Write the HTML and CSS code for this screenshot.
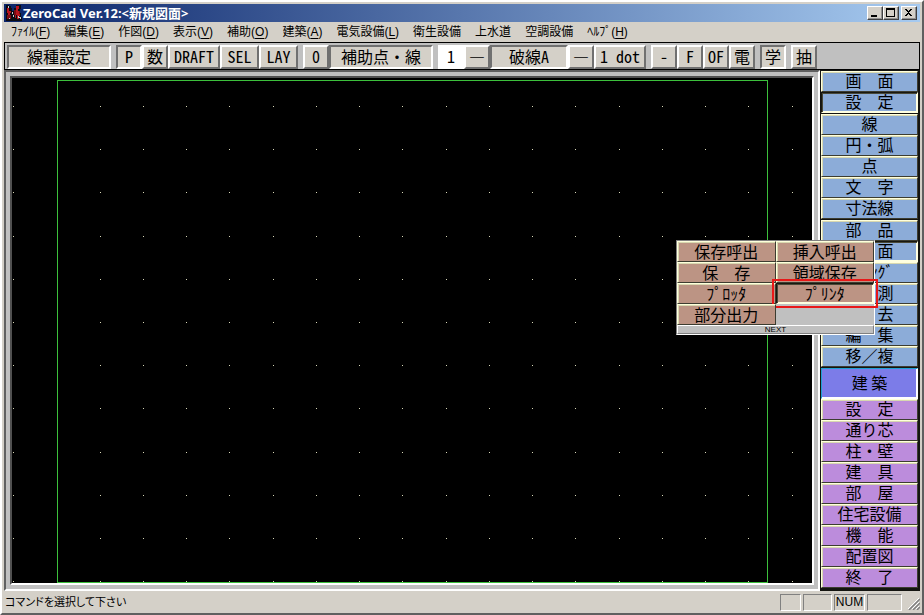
FILE: index.html
```html
<!DOCTYPE html>
<html lang="ja">
<head>
<meta charset="utf-8">
<title>ZeroCad Ver.12</title>
<link rel="stylesheet" href="styles.css">
</head>
<body>
<div class="window">
  <header class="titlebar">
    <svg class="app-icon" viewBox="0 0 16 16" shape-rendering="crispEdges" aria-hidden="true">
      <path fill="#0c0c14" d="M0 0h3v1h2v2h1v3h2V3h2V0h5v4h-1v4h1v4h1v4H0z"/>
      <path fill="#b8141e" d="M1 3h2v3h2v2H4v3H2V8H1zM10 1h3v3h-1v2h2v5h-1v3h-2v-4h-1v3H9v-4h1V5h0z"/>
      <path fill="#7a0c14" d="M1 10h4v4H1zM8 5h2v5H8zM13 6h1v3h-1z"/>
      <path fill="#c9ccd4" d="M2 1h1v2H2zM6 7h1v2H6zM7 10h1v2H7zM12 11h1v1h2v2h-1v-1h-2zM3 13h1v1H3z"/>
    </svg>
    <h1 class="title">ZeroCad Ver.12:&lt;新規図面&gt;</h1>
    <div class="controls">
      <button class="ctl" aria-label="最小化"><svg viewBox="0 0 11 10"><path d="M2 7h6v2H2z"/></svg></button>
      <button class="ctl" aria-label="最大化"><svg viewBox="0 0 11 10"><path fill-rule="evenodd" d="M1 0h9v9H1zM2 2v6h7V2z"/></svg></button>
      <button class="ctl ctl-close" aria-label="閉じる"><svg viewBox="0 0 11 10"><path d="M2 1h2v1h1v1h1V2h1V1h2v1H8v1H7v1H6v1h1v1h1v1h1v1H7V7H6V6H5v1H4v1H2V7h1V6h1V5h1V4H4V3H3V2H2z"/></svg></button>
    </div>
  </header>

  <nav class="menubar">
    <button>ﾌｧｲﾙ(<u>F</u>)</button>
    <button>編集(<u>E</u>)</button>
    <button>作図(<u>D</u>)</button>
    <button>表示(<u>V</u>)</button>
    <button>補助(<u>O</u>)</button>
    <button>建築(<u>A</u>)</button>
    <button>電気設備(<u>L</u>)</button>
    <button>衛生設備</button>
    <button>上水道</button>
    <button>空調設備</button>
    <button>ﾍﾙﾌﾟ(<u>H</u>)</button>
  </nav>

  <div class="toolbar">
    <div class="group"><button class="tool w104 pressed">線種設定</button></div>
    <div class="group">
      <button class="tool pressed">P</button>
      <button class="tool">数</button>
      <button class="tool w52">DRAFT</button>
      <button class="tool w39">SEL</button>
      <button class="tool w39">LAY</button>
    </div>
    <div class="group">
      <button class="tool">0</button>
      <button class="tool w104 pressed">補助点・線</button>
    </div>
    <div class="group">
      <button class="tool pen">1</button>
      <button class="tool">―</button>
      <button class="tool w78 pressed">破線A</button>
      <button class="tool">―</button>
      <button class="tool w52">1 dot</button>
    </div>
    <div class="group">
      <button class="tool">-</button>
      <button class="tool">F</button>
      <button class="tool">OF</button>
      <button class="tool">電</button>
    </div>
    <div class="group"><button class="tool pressed">学</button></div>
    <div class="group"><button class="tool">抽</button></div>
  </div>

  <main class="work">
    <div class="frame">
      <svg class="canvas" id="canvas" shape-rendering="crispEdges" role="img" aria-label="図面">
        <rect class="paper" x="45" y="2" width="710" height="502"/>
        <g id="grid"></g>
      </svg>
    </div>

    <aside class="side">
      <div class="set blue">
        <button class="cmd">画　面</button>
        <button class="cmd sunk">設　定</button>
      </div>
      <div class="set blue">
        <button class="cmd">線</button>
        <button class="cmd">円・弧</button>
        <button class="cmd">点</button>
        <button class="cmd">文　字</button>
        <button class="cmd">寸法線</button>
      </div>
      <div class="set blue">
        <button class="cmd">部　品</button>
        <button class="cmd sunk">図　面</button>
        <button class="cmd">ﾊｯﾁﾝｸﾞ</button>
        <button class="cmd">計　測</button>
        <button class="cmd">消　去</button>
        <button class="cmd">編　集</button>
        <button class="cmd">移／複</button>
      </div>
      <div class="set violet">
        <button class="cmd mode">建 築</button>
        <button class="cmd">設　定</button>
        <button class="cmd">通り芯</button>
        <button class="cmd">柱・壁</button>
        <button class="cmd">建　具</button>
        <button class="cmd">部　屋</button>
        <button class="cmd">住宅設備</button>
        <button class="cmd">機　能</button>
        <button class="cmd">配置図</button>
        <button class="cmd">終　了</button>
      </div>
    </aside>

    <div class="popup">
      <div class="choices">
        <button class="cmd">保存呼出</button>
        <button class="cmd">挿入呼出</button>
        <button class="cmd">保　存</button>
        <button class="cmd">領域保存</button>
        <button class="cmd">ﾌﾟﾛｯﾀ</button>
        <button class="cmd sunk marked">ﾌﾟﾘﾝﾀ</button>
        <button class="cmd">部分出力</button>
      </div>
      <button class="next">NEXT</button>
    </div>
  </main>

  <footer class="status">
    <span class="message">コマンドを選択して下さい</span>
    <span class="pane w21"></span>
    <span class="pane w29"></span>
    <span class="pane w31">NUM</span>
    <span class="pane w35"></span>
    <svg class="grip" viewBox="0 0 12 12" aria-hidden="true">
      <path stroke="#fff" d="M0 11L11 0M4 11L11 4M8 11L11 8"/>
      <path stroke="#808080" stroke-width="1.5" d="M1 12L12 1M5 12L12 5M9 12L12 9"/>
    </svg>
  </footer>
</div>
<script src="grid.js"></script>
</body>
</html>
```
FILE: styles.css
```css
* { box-sizing: border-box; }

body {
  margin: 0;
  background: #d4d0c8;
  color: #000;
  font-family: "Liberation Sans", "Noto Sans CJK JP", sans-serif;
  font-size: 12px;
}

button {
  margin: 0;
  padding: 0;
  border: 0;
  background: none;
  color: inherit;
  font: inherit;
  white-space: nowrap;
}

.window {
  display: flex;
  flex-direction: column;
  min-height: 100vh;
  padding: 2px 2px 0 2px;
  border: 2px solid;
  border-color: #fff #606060 #606060 #fff;
  background: #d4d0c8;
}

/* title bar */
.titlebar {
  display: flex;
  align-items: center;
  height: 18px;
  padding: 0 3px 0 2px;
  background: linear-gradient(to right, #0a246a, #a6caf0);
}

.app-icon { width: 16px; height: 16px; }

.title {
  flex: 1;
  margin: 0 0 0 1px;
  color: #fff;
  font: bold 13px/18px "Noto Sans", "Noto Sans CJK JP", sans-serif;
}

.controls { display: flex; }

.ctl {
  width: 16px;
  height: 14px;
  padding: 1px;
  border: 1px solid;
  border-color: #fff #404040 #404040 #fff;
  background: #d4d0c8;
  box-shadow: inset -1px -1px #909090;
}

.ctl svg { display: block; width: 11px; height: 10px; }
.ctl-close { margin-left: 2px; }

/* menus */
.menubar {
  display: flex;
  gap: 14px;
  height: 20px;
  padding: 0 7px;
  line-height: 18px;
}

.menubar u { text-underline-offset: 2px; }

/* tool strip */
.toolbar {
  display: flex;
  gap: 5px;
  height: 28px;
  padding: 2px;
  border: 1px solid #000;
  background: #c0c0c0;
}

.group { display: flex; }

.tool {
  width: 26px;
  height: 24px;
  padding-bottom: 2px;
  border: 2px solid;
  border-color: #fff #707070 #707070 #fff;
  background: #d4d0c8;
  font: 16px/16px "Noto Sans CJK JP", monospace;
  font-feature-settings: "hwid";
}

.tool.pressed { border-color: #707070 #fff #fff #707070; }
.tool.pen { border-color: #fff; background: #fff; }
.w39 { width: 39px; }
.w52 { width: 52px; }
.w78 { width: 78px; }
.w104 { width: 104px; }

/* drawing area */
.work {
  position: relative;
  display: flex;
  flex: 1;
}

.frame {
  display: flex;
  flex: 1;
  padding: 4px;
  border: 2px solid;
  border-color: #606060 #fff #fff #606060;
  background: #c0c0c0;
}

.canvas {
  flex: 1;
  width: 100%;
  min-width: 0;
  border: 2px solid;
  border-color: #505050 #fff #fff #505050;
  background: #000;
}

.paper { fill: none; stroke: #3cc03c; }
#grid { fill: #d8d8b8; }

/* command column */
.side {
  display: flex;
  flex-direction: column;
  gap: 1px;
  width: 100px;
  padding: 1px 2px 3px 1px;
  background: #141410;
}

.set { display: flex; flex-direction: column; }

.cmd {
  height: 21px;
  padding-bottom: 3px;
  border: 1px solid;
  border-color: #ffffdc #3c3c30 #3c3c30 #ffffdc;
  box-shadow: inset 1px 1px #d8d8b0;
  font: 16px/16px "Noto Sans CJK JP", sans-serif;
}

.cmd.sunk {
  border-color: #181810 #ffffe0 #ffffe0 #181810;
  box-shadow: inset 1px 1px #484838, inset -1px -1px #ffffe0;
}

.blue .cmd { background: #8cacd8; }
.violet .cmd { background: #bc8cdc; }

.violet .mode {
  height: 31px;
  border-color: #20a0d0 #fff #fff #20a0d0;
  box-shadow: inset -1px -1px #fff;
  background: #7c7ce8;
}

/* command palette above the drawing */
.popup {
  position: absolute;
  top: 170px;
  right: 45px;
  width: 199px;
  border: 1px solid;
  border-color: #808080 #fff #fff #808080;
  background: #c0c0c0;
}

.choices { display: grid; grid-template-columns: 1fr 1fr; }
.choices .cmd { padding-bottom: 1px; background: #bc9484; }
.marked { outline: 2px solid #e81818; outline-offset: 2px; }

.next {
  display: block;
  width: 100%;
  height: 9px;
  border: 1px solid;
  border-color: #fff #808080 #808080 #fff;
  font: 8px/7px "Liberation Sans", sans-serif;
}

/* status bar */
.status {
  display: flex;
  align-items: center;
  gap: 2px;
  height: 22px;
  padding: 0 0 0 1px;
}

.message {
  flex: 1;
  font-size: 11px;
  line-height: 20px;
  font-feature-settings: "palt";
}

.pane {
  height: 17px;
  border: 1px solid;
  border-color: #808080 #fff #fff #808080;
  line-height: 15px;
  text-align: center;
}

.w21 { width: 21px; }
.w29 { width: 29px; }
.w31 { width: 31px; }
.w35 { width: 35px; }
.grip { width: 12px; height: 12px; margin: 4px 0 0 4px; }
```
FILE: grid.js
```js
// Draws the snap points of the drawing sheet.
const grid = document.getElementById("grid");
const step = 43.25;
for (let row = 0; row < 12; row++) {
  for (let col = 0; col < 19; col++) {
    if (col === 1) continue;
    const dot = document.createElementNS("http://www.w3.org/2000/svg", "rect");
    dot.setAttribute("x", Math.round(1 + col * step));
    dot.setAttribute("y", Math.round(28 + row * 43.2));
    dot.setAttribute("width", 1);
    dot.setAttribute("height", 1);
    grid.appendChild(dot);
  }
}
```
